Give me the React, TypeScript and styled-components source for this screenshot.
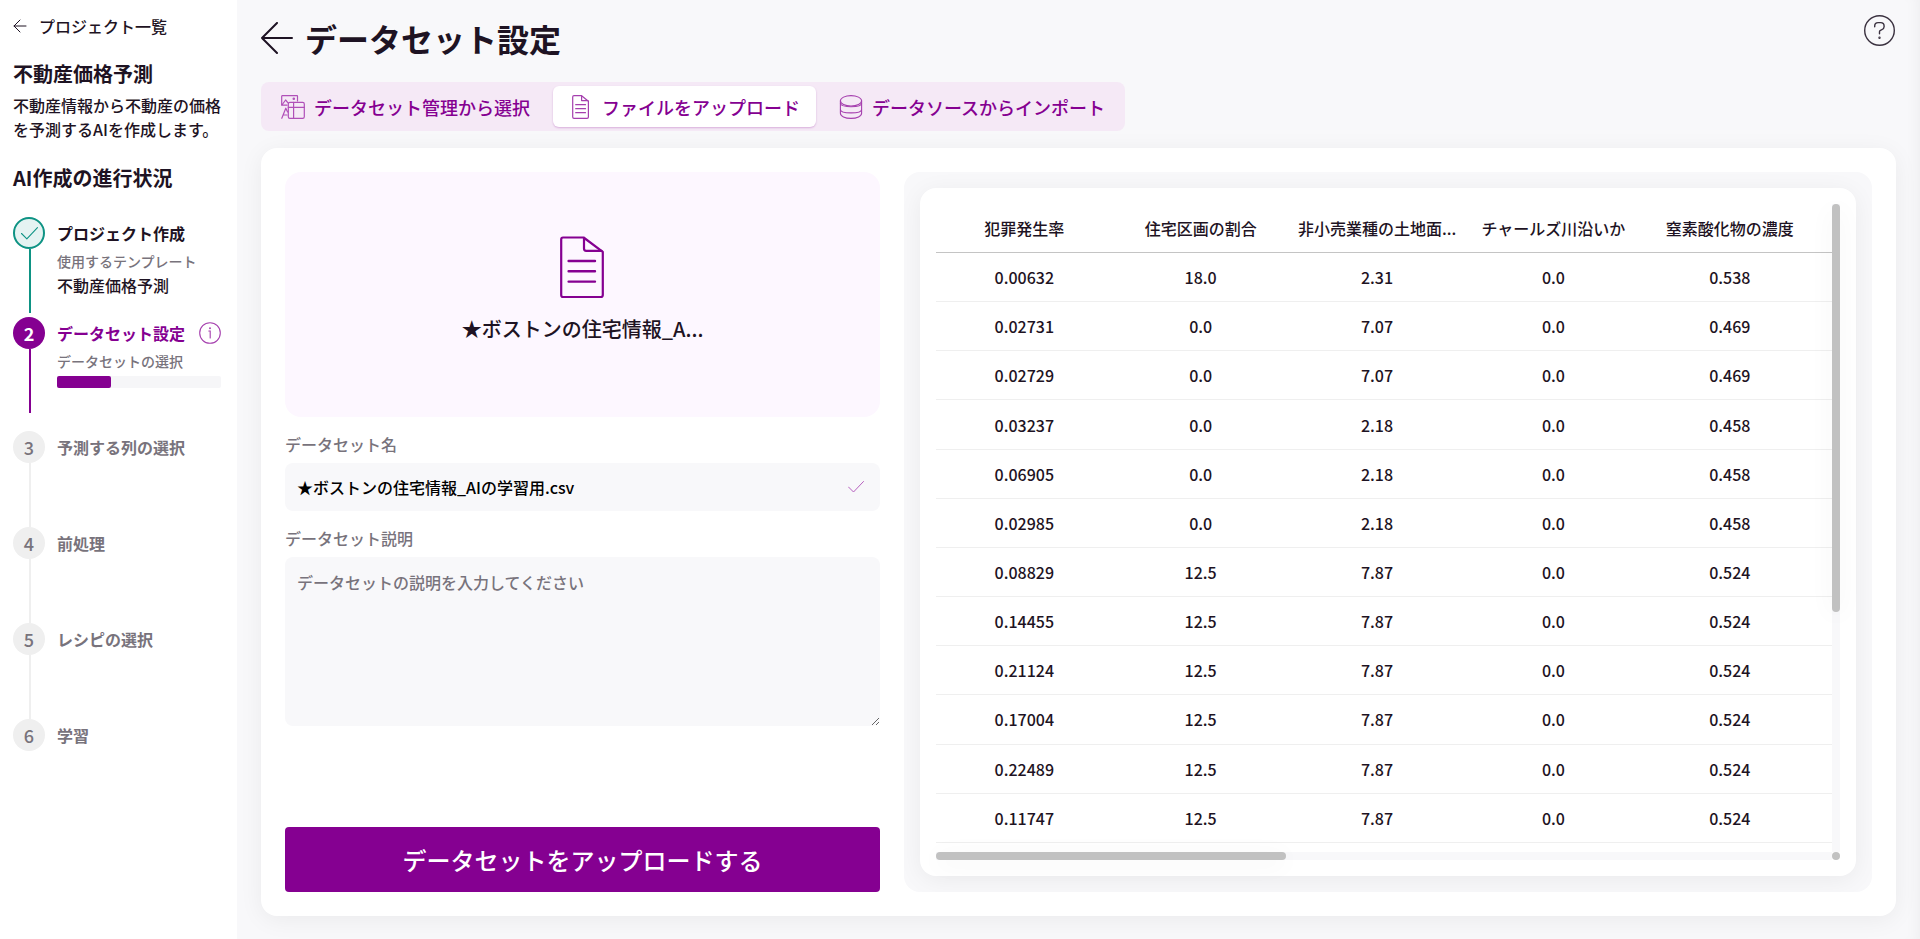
import React from "react";
import styled, { createGlobalStyle } from "styled-components";

const purple = "#850091";
const ink = "#1e1323";
const grey = "#78737c";
const pale = "#f8f8fa";
const green = "#0e9384";

const GlobalStyle = createGlobalStyle`
  *, *::before, *::after { box-sizing: border-box; }
  body {
    margin: 0;
    background: ${pale};
    color: ${ink};
    font-family: "Noto Sans CJK JP", "Noto Sans", sans-serif;
    font-size: 16px;
    font-weight: 500;
    line-height: 24px;
  }
  button, input, textarea { font: inherit; color: inherit; border: 0; }
  h1, h2, p, ol { margin: 0; padding: 0; }
  svg { display: block; flex: none; }
`;

const Page = styled.div`
  display: flex;
  min-height: 100vh;
`;

const Sidebar = styled.aside`
  flex: none;
  width: 237px;
  padding: 14px 12px 24px 13px;
  background: #fff;
`;

const BackLink = styled.a`
  display: flex;
  align-items: center;
  gap: 12px;
  color: inherit;
  text-decoration: none;
`;

const SideHeading = styled.h2`
  margin-top: 20px;
  font-size: 20px;
  line-height: 32px;
  font-weight: 700;
`;

const Description = styled.p`
  margin: 3px 0 21px;
`;

const Steps = styled.ol`
  margin-top: 23px;
  list-style: none;
`;

type StepState = "done" | "current" | "todo";
const lineColor = { done: green, current: purple, todo: "#efefef" };

const StepItem = styled.li<{ $height: number }>`
  display: flex;
  gap: 12px;
  min-height: ${(p) => p.$height}px;
`;

const Rail = styled.div<{ $state: StepState; $last?: boolean }>`
  display: flex;
  flex-direction: column;
  align-items: center;
  width: 32px;
  &::after {
    content: "";
    display: ${(p) => (p.$last ? "none" : "block")};
    width: 2px;
    height: 64px;
    margin-left: 2px;
    background: ${(p) => lineColor[p.$state]};
  }
`;

const Badge = styled.span<{ $state: StepState }>`
  display: flex;
  align-items: center;
  justify-content: center;
  width: 32px;
  height: 32px;
  border-radius: 50%;
  font-size: 18px;
  font-weight: ${(p) => (p.$state === "current" ? 700 : 500)};
  color: ${(p) => (p.$state === "current" ? "#fff" : grey)};
  border: ${(p) => (p.$state === "done" ? `2px solid ${green}` : "0")};
  background: ${(p) => ({ done: "#e5f3f2", current: purple, todo: "#efefef" })[p.$state]};
`;

const StepBody = styled.div`
  flex: 1;
`;

const StepTitle = styled.div<{ $state: StepState }>`
  display: flex;
  align-items: center;
  justify-content: space-between;
  height: 32px;
  padding-right: 4px;
  font-weight: 700;
  color: ${(p) => ({ done: ink, current: purple, todo: grey })[p.$state]};
`;

const StepNote = styled.div`
  font-size: 14px;
  color: ${grey};
`;

const ProgressTrack = styled.div`
  height: 12px;
  width: 164px;
  margin-top: 3px;
  border-radius: 2px;
  background: #f6f6f8;
`;

const ProgressFill = styled.div`
  width: 33%;
  height: 100%;
  border-radius: 2px;
  background: ${purple};
`;

const Main = styled.main`
  flex: 1;
  min-width: 0;
  display: flex;
  flex-direction: column;
  padding: 14px 24px 23px;
  box-shadow: inset -12px 0 16px -12px rgba(0, 0, 0, 0.06);
`;

const Header = styled.header`
  display: flex;
  align-items: flex-start;
  justify-content: space-between;
`;

const TitleGroup = styled.div`
  display: flex;
  align-items: center;
  gap: 12px;
`;

const PageTitle = styled.h1`
  font-size: 32px;
  line-height: 48px;
  font-weight: 700;
`;

const IconButton = styled.button`
  padding: 0;
  background: none;
  cursor: pointer;
`;

const Tabs = styled.div`
  display: flex;
  align-self: flex-start;
  gap: 7px;
  height: 49px;
  margin: 20px 0 17px;
  padding: 4px;
  border-radius: 8px;
  background: #f5e9f6;
`;

const Tab = styled.button<{ $active?: boolean }>`
  display: flex;
  align-items: center;
  gap: 9px;
  padding: 0 16px;
  border-radius: 6px;
  font-size: 18px;
  font-weight: 500;
  white-space: nowrap;
  color: ${purple};
  background: ${(p) => (p.$active ? "#fff" : "transparent")};
  box-shadow: ${(p) => (p.$active ? "0 1px 2px rgba(133, 0, 145, 0.25)" : "none")};
  cursor: pointer;
`;

const Card = styled.section`
  flex: 1;
  display: flex;
  gap: 24px;
  padding: 24px;
  border-radius: 16px;
  background: #fff;
  box-shadow: 0 4px 24px rgba(0, 0, 0, 0.06);
`;

const UploadForm = styled.form`
  flex: none;
  width: 37.5%;
  display: flex;
  flex-direction: column;
`;

const DropArea = styled.div`
  display: flex;
  flex-direction: column;
  align-items: center;
  justify-content: center;
  gap: 15px;
  height: 245px;
  padding-bottom: 10px;
  border-radius: 16px;
  background: #fdf7ff;
  font-size: 20px;
  line-height: 30px;
`;

const Field = styled.div`
  display: flex;
  flex-direction: column;
  gap: 7px;
  margin-top: 15px;
`;

const Label = styled.label`
  color: ${grey};
`;

const InputBox = styled.div`
  display: flex;
  align-items: center;
  height: 48px;
  padding: 0 16px 0 12px;
  border-radius: 8px;
  background: ${pale};
`;

const TextInput = styled.input`
  flex: 1;
  min-width: 0;
  padding: 0;
  background: none;
  color: #000;
`;

const TextArea = styled.textarea`
  height: 169px;
  padding: 13px 12px;
  border-radius: 8px;
  background: ${pale};
  resize: vertical;
  &::placeholder { color: ${grey}; opacity: 1; }
`;

const SubmitButton = styled.button`
  height: 65px;
  margin-top: auto;
  border-radius: 4px;
  background: ${purple};
  color: #fff;
  font-size: 24px;
  cursor: pointer;
`;

const PreviewPanel = styled.div`
  flex: 1;
  min-width: 0;
  display: flex;
  padding: 16px;
  border-radius: 16px;
  background: ${pale};
  overflow: hidden;
`;

const PreviewCard = styled.div`
  flex: 1;
  min-width: 0;
  display: grid;
  grid-template: minmax(0, 1fr) 8px / minmax(0, 1fr) 8px;
  padding: 16px;
  border-radius: 16px;
  background: #fff;
  box-shadow: 0 4px 24px rgba(0, 0, 0, 0.06);
`;

const TableView = styled.div`
  overflow: hidden;
`;

const Table = styled.table`
  width: 100%;
  height: 639px;
  table-layout: fixed;
  border-collapse: separate;
  border-spacing: 0;
  text-align: center;
`;

const EdgeCol = styled.col`
  width: 14px;
`;

const HeadCell = styled.th`
  height: 49px;
  padding: 0;
  font-weight: 500;
  white-space: nowrap;
  border-bottom: 1px solid #c4c4c4;
`;

const Cell = styled.td`
  padding: 0;
  border-bottom: 1px solid #efefef;
`;

const Track = styled.div`
  background: ${pale};
`;

const Thumb = styled.div<{ $vertical?: boolean }>`
  width: ${(p) => (p.$vertical ? "100%" : "39%")};
  height: ${(p) => (p.$vertical ? "63%" : "100%")};
  border-radius: 4px;
  background: #c1c1c1;
  box-shadow: 0 4px 24px rgba(0, 0, 0, 0.06);
`;

const Corner = styled.div`
  border-radius: 50%;
  background: #c1c1c1;
`;

const ArrowLeft = ({ size, stroke }: { size: number; stroke: number }) => (
  <svg width={size} height={size} viewBox={`0 0 ${size} ${size}`} fill="none" stroke="currentColor" strokeWidth={stroke} strokeLinecap="round" strokeLinejoin="round" aria-hidden="true">
    <path d={`M${size / 2} 1 L1 ${size / 2} L${size / 2} ${size - 1} M1 ${size / 2} H${size - 1}`} />
  </svg>
);

const CheckIcon = ({ size, color }: { size: number; color: string }) => (
  <svg width={size} height={size} viewBox="0 0 16 16" fill="none" stroke={color} strokeWidth="1" strokeLinecap="round" strokeLinejoin="round" aria-hidden="true">
    <path d="M0.5 8 L5.5 13 L15.5 2.5" />
  </svg>
);

const InfoIcon = () => (
  <svg width="22" height="22" viewBox="0 0 22 22" fill="none" stroke="#a53fae" strokeWidth="1.1" strokeLinecap="round">
    <circle cx="11" cy="11" r="10.3" />
    <path d="M9.8 9 H11.2 V16" />
    <circle cx="11" cy="6.2" r="0.4" />
  </svg>
);

const HelpIcon = () => (
  <svg width="32" height="32" viewBox="0 0 32 32" fill="none" stroke="#3a313f" strokeWidth="1.4" strokeLinecap="round" strokeLinejoin="round">
    <circle cx="15.5" cy="16.5" r="14.8" />
    <path d="M10.7 12.8 V12 A3.4 3.4 0 0 1 14.1 8.6 H16.7 A3.4 3.4 0 0 1 20.1 12 V12.7 A3.4 3.4 0 0 1 17.9 15.7 L16.5 16.3 A1.6 1.6 0 0 0 15.5 17.8 V19.8" />
    <circle cx="15.5" cy="23.8" r="0.5" />
  </svg>
);

const DatasetIcon = () => (
  <svg width="24" height="24" viewBox="0 0 24 24" fill="none" stroke="#b04fb8" strokeWidth="1.2" strokeLinecap="round" strokeLinejoin="round" aria-hidden="true">
    <path d="M0.7 10 V1.2 Q0.7 0.7 1.2 0.7 H16 Q16.5 0.7 16.5 1.2 V6" />
    <path d="M0.9 10 L4.6 5 L7 7.8 M0.9 10.2 H6" />
    <circle cx="12.8" cy="3.8" r="0.7" />
    <path d="M0.8 23.3 L4.8 13.2 L6.6 17 M2.3 20 H6" />
    <rect x="7.3" y="7.3" width="16" height="16" rx="1.6" />
    <path d="M7.3 12.3 H23.3 M12.6 7.3 V23.3" />
  </svg>
);

const FileIcon = () => (
  <svg width="24" height="24" viewBox="0 0 24 24" fill="none" stroke="#a53fae" strokeWidth="1.2" strokeLinecap="round" strokeLinejoin="round" aria-hidden="true">
    <path d="M5 0.7 H12.6 L19.4 6.2 V22 Q19.4 23.3 18.1 23.3 H5 Q3.7 23.3 3.7 22 V2 Q3.7 0.7 5 0.7 Z" />
    <path d="M12.6 0.9 V5.6 H19" />
    <path d="M6.7 9.7 H16.5 M6.7 13.7 H16.5 M6.7 17.7 H16.5" />
  </svg>
);

const DatabaseIcon = () => (
  <svg width="24" height="24" viewBox="0 0 24 24" fill="none" stroke="#a53fae" strokeWidth="1.1" aria-hidden="true">
    <ellipse cx="12" cy="5.8" rx="10.6" ry="5.2" />
    <path d="M1.4 5.8 V18.2 C1.4 21.2 6 23.4 12 23.4 S22.6 21.2 22.6 18.2 V5.8" />
    <path d="M1.4 8 C1.4 13 22.6 13 22.6 8" />
    <path d="M1.4 14.4 C1.4 19 22.6 19 22.6 14.4" />
  </svg>
);

const LargeFileIcon = () => (
  <svg width="46" height="64" viewBox="1 0 46 64" fill="none" stroke={purple} strokeWidth="2.2" strokeLinecap="round" strokeLinejoin="round" aria-hidden="true">
    <path d="M4 2.5 H24.6 L43.8 16.8 V60 Q43.8 62 41.8 62 H4 Q2.2 62 2.2 60 V4.5 Q2.2 2.5 4 2.5 Z" />
    <path d="M25 3 V13.5 Q25 15.8 27.2 15.8 H42.5" />
    <path d="M9.6 26 H36 M9.6 36.3 H36 M9.6 46.6 H36" strokeWidth="2.4" />
  </svg>
);

const columns = ["犯罪発生率", "住宅区画の割合", "非小売業種の土地面...", "チャールズ川沿いか", "窒素酸化物の濃度"];

const rows = [
  ["0.00632", "18.0", "2.31", "0.0", "0.538"],
  ["0.02731", "0.0", "7.07", "0.0", "0.469"],
  ["0.02729", "0.0", "7.07", "0.0", "0.469"],
  ["0.03237", "0.0", "2.18", "0.0", "0.458"],
  ["0.06905", "0.0", "2.18", "0.0", "0.458"],
  ["0.02985", "0.0", "2.18", "0.0", "0.458"],
  ["0.08829", "12.5", "7.87", "0.0", "0.524"],
  ["0.14455", "12.5", "7.87", "0.0", "0.524"],
  ["0.21124", "12.5", "7.87", "0.0", "0.524"],
  ["0.17004", "12.5", "7.87", "0.0", "0.524"],
  ["0.22489", "12.5", "7.87", "0.0", "0.524"],
  ["0.11747", "12.5", "7.87", "0.0", "0.524"],
];

type StepData = { title: string; state: StepState; height: number; body?: React.ReactNode };

const steps: StepData[] = [
  {
    title: "プロジェクト作成",
    state: "done",
    height: 100,
    body: (
      <>
        <StepNote>使用するテンプレート</StepNote>
        <div>不動産価格予測</div>
      </>
    ),
  },
  {
    title: "データセット設定",
    state: "current",
    height: 114,
    body: (
      <>
        <StepNote>データセットの選択</StepNote>
        <ProgressTrack role="progressbar" aria-label="データセットの選択" aria-valuenow={33}>
          <ProgressFill />
        </ProgressTrack>
      </>
    ),
  },
  { title: "予測する列の選択", state: "todo", height: 96 },
  { title: "前処理", state: "todo", height: 96 },
  { title: "レシピの選択", state: "todo", height: 96 },
  { title: "学習", state: "todo", height: 32 },
];

export default function App() {
  return (
    <>
      <GlobalStyle />
      <Page>
        <Sidebar>
          <BackLink href="#projects">
            <ArrowLeft size={14} stroke={1} />
            プロジェクト一覧
          </BackLink>
          <SideHeading>不動産価格予測</SideHeading>
          <Description>不動産情報から不動産の価格を予測するAIを作成します。</Description>
          <SideHeading>AI作成の進行状況</SideHeading>
          <Steps>
            {steps.map((step, i) => (
              <StepItem key={step.title} $height={step.height}>
                <Rail $state={step.state} $last={i === steps.length - 1}>
                  <Badge $state={step.state}>
                    {step.state === "done" ? <CheckIcon size={17} color={green} /> : i + 1}
                  </Badge>
                </Rail>
                <StepBody>
                  <StepTitle $state={step.state}>
                    {step.title}
                    {step.state === "current" && (
                      <IconButton type="button" aria-label="情報">
                        <InfoIcon />
                      </IconButton>
                    )}
                  </StepTitle>
                  {step.body}
                </StepBody>
              </StepItem>
            ))}
          </Steps>
        </Sidebar>

        <Main>
          <Header>
            <TitleGroup>
              <IconButton type="button" aria-label="戻る">
                <ArrowLeft size={32} stroke={2} />
              </IconButton>
              <PageTitle>データセット設定</PageTitle>
            </TitleGroup>
            <IconButton type="button" aria-label="ヘルプ">
              <HelpIcon />
            </IconButton>
          </Header>

          <Tabs role="tablist">
            <Tab type="button" role="tab" aria-selected={false}>
              <DatasetIcon />
              データセット管理から選択
            </Tab>
            <Tab type="button" role="tab" aria-selected $active>
              <FileIcon />
              ファイルをアップロード
            </Tab>
            <Tab type="button" role="tab" aria-selected={false}>
              <DatabaseIcon />
              データソースからインポート
            </Tab>
          </Tabs>

          <Card>
            <UploadForm onSubmit={(e) => e.preventDefault()}>
              <DropArea>
                <LargeFileIcon />
                ★ボストンの住宅情報_A...
              </DropArea>
              <Field>
                <Label htmlFor="dataset-name">データセット名</Label>
                <InputBox>
                  <TextInput id="dataset-name" type="text" defaultValue="★ボストンの住宅情報_AIの学習用.csv" />
                  <CheckIcon size={16} color="#b65fbe" />
                </InputBox>
              </Field>
              <Field>
                <Label htmlFor="dataset-description">データセット説明</Label>
                <TextArea id="dataset-description" placeholder="データセットの説明を入力してください" />
              </Field>
              <SubmitButton type="submit">データセットをアップロードする</SubmitButton>
            </UploadForm>

            <PreviewPanel>
              <PreviewCard>
                <TableView>
                  <Table>
                    <colgroup>
                      {columns.map((c) => (
                        <col key={c} />
                      ))}
                      <EdgeCol />
                    </colgroup>
                    <thead>
                      <tr>
                        {columns.map((c) => (
                          <HeadCell key={c} scope="col">
                            {c}
                          </HeadCell>
                        ))}
                        <HeadCell as="td" />
                      </tr>
                    </thead>
                    <tbody>
                      {rows.map((row) => (
                        <tr key={row[0]}>
                          {row.map((value, i) => (
                            <Cell key={columns[i]}>{value}</Cell>
                          ))}
                          <Cell />
                        </tr>
                      ))}
                    </tbody>
                  </Table>
                </TableView>
                <Track>
                  <Thumb $vertical />
                </Track>
                <Track>
                  <Thumb />
                </Track>
                <Corner />
              </PreviewCard>
            </PreviewPanel>
          </Card>
        </Main>
      </Page>
    </>
  );
}
